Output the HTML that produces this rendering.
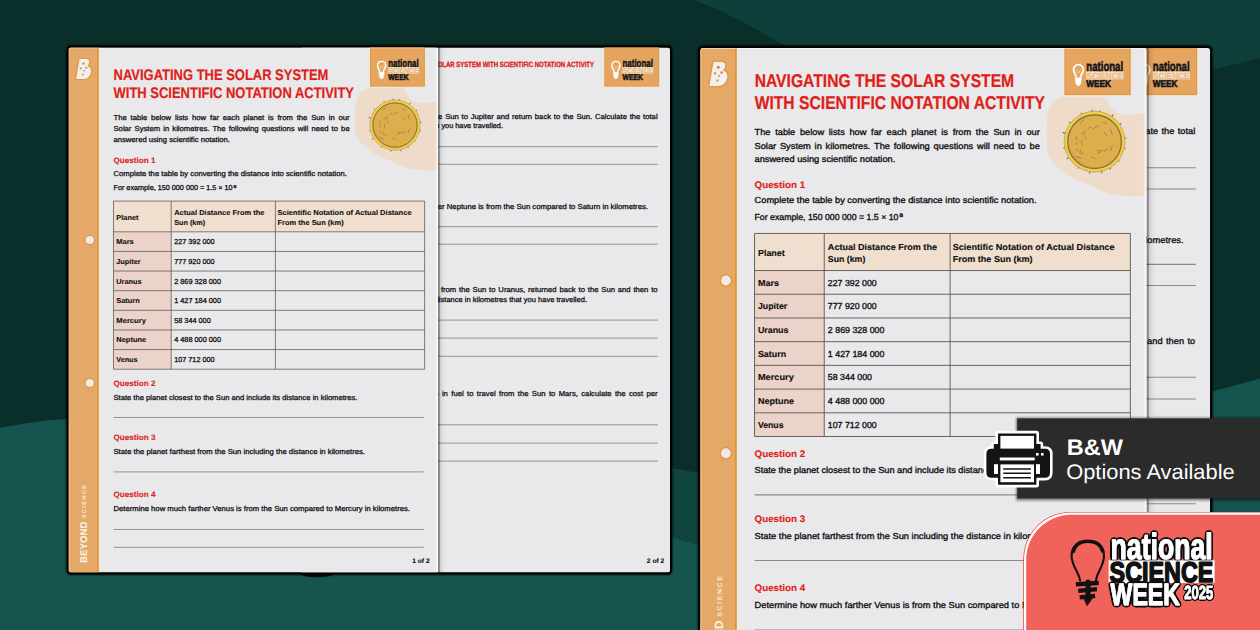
<!DOCTYPE html>
<html lang="en"><head><meta charset="utf-8"><title>Navigating the Solar System with Scientific Notation Activity</title>
<style>html,body{margin:0;padding:0;background:#0a2f2b}body{width:1260px;height:630px;overflow:hidden;position:relative;font-family:"Liberation Sans",sans-serif}svg{position:absolute;left:0;top:0;display:block}text{white-space:pre}</style></head><body>
<svg width="1260" height="630" viewBox="0 0 1260 630" font-family="Liberation Sans, sans-serif" text-rendering="geometricPrecision">
<defs><filter id="blur2" x="-5%" y="-5%" width="110%" height="110%"><feGaussianBlur stdDeviation="0.8"/></filter><filter id="blur4" x="-10%" y="-20%" width="120%" height="140%"><feGaussianBlur stdDeviation="2.5"/></filter><linearGradient id="edge" x1="0" x2="1" y1="0" y2="0"><stop offset="0" stop-color="#000" stop-opacity=".45"/><stop offset=".19" stop-color="#000" stop-opacity=".38"/><stop offset=".27" stop-color="#000" stop-opacity=".13"/><stop offset=".55" stop-color="#000" stop-opacity=".04"/><stop offset="1" stop-color="#000" stop-opacity="0"/></linearGradient><linearGradient id="hl" x1="0" x2="1" y1="0" y2="0"><stop offset="0" stop-color="#fff" stop-opacity="0"/><stop offset="1" stop-color="#fff" stop-opacity=".9"/></linearGradient><filter id="ol" x="-5%" y="-15%" width="110%" height="130%"><feGaussianBlur in="SourceAlpha" stdDeviation="1.5"/><feComponentTransfer result="d"><feFuncA type="linear" slope="12" intercept="-0.6"/></feComponentTransfer><feFlood flood-color="#111"/><feComposite in2="d" operator="in" result="o"/><feMerge><feMergeNode in="o"/><feMergeNode in="SourceGraphic"/></feMerge></filter><filter id="ol2" x="-8%" y="-20%" width="116%" height="140%"><feGaussianBlur in="SourceAlpha" stdDeviation="1.2"/><feComponentTransfer result="d"><feFuncA type="linear" slope="12" intercept="-0.6"/></feComponentTransfer><feFlood flood-color="#111"/><feComposite in2="d" operator="in" result="o"/><feMerge><feMergeNode in="o"/><feMergeNode in="SourceGraphic"/></feMerge></filter></defs>
<rect width="1260" height="630" fill="#0a2f2b"/>
<path d="M692 0 C720 8 750 26 783 44.5 C900 110 1100 100 1211 70 L1260 58 V0 Z" fill="#0f3f3a"/>
<path d="M0 428 C30 422 50 420 67 419 C300 405 520 440 685 470.5 C800 492 1000 450 1211 391.5 L1260 381 V630 H0 Z" fill="#0f443f"/>
<path d="M0 428 C30 422 50 420 67 419 C250 408 450 470 685 541.5 C700 546 720 550 760 560 L1211 392 L1260 378.5 V630 H0 Z" fill="#16544f"/>
<ellipse cx="317" cy="573.6" rx="17" ry="3.6" fill="#000" opacity=".8"/>
<rect x="66.3" y="45.2" width="606.0" height="529.6" rx="4.5" fill="#000" filter="url(#blur2)"/><rect x="66.9" y="45.8" width="604.8" height="528.4" rx="3.8" fill="#000"/>
<g transform="translate(300,47.5)">
<clipPath id="cp2a"><rect x="0" y="0" width="370.0" height="525.0" rx="2.5"/></clipPath>
<g clip-path="url(#cp2a)" font-family="Liberation Sans, sans-serif">
<rect x="0" y="0" width="370.0" height="525.0" fill="#e9e9ec"/>
<rect x="304.8" y="0" width="53.9" height="38.6" fill="#e5a55f"/>
<rect x="304.8" y="0" width="53.9" height="38.6" fill="none" stroke="#e8992f" stroke-width="1"/>
<g transform="translate(311.10,13.10) scale(0.960)" fill="none" stroke="#fff" stroke-width="1.5" stroke-linecap="round"><path d="M3.0 11.2 C2.9 9.2 0.8 8.2 0.8 5.0 A4.2 4.2 0 0 1 9.2 5.0 C9.2 8.2 7.1 9.2 7.0 11.2"/><path d="M3.4 5.2 L4.4 8 M6.6 5.2 L5.6 8" stroke-width="0.5" opacity=".7"/><path d="M2.3 12.2 H7.7 L6.9 17.6 L5 19.2 L3.1 17.6 Z" fill="#fff" stroke-width="0.5"/></g>
<g font-family="Liberation Sans, sans-serif" font-weight="700">
<text x="322.5" y="19.2" font-size="11.2" fill="#10141c" stroke="#10141c" stroke-width="0.45" textLength="30.4" lengthAdjust="spacingAndGlyphs">national</text>
<rect x="322.5" y="19.6" width="30.6" height="6.4" fill="#f3ece2" opacity=".85"/>
<text x="322.8" y="25.5" font-size="7.4" fill="#e9b57c" textLength="30" lengthAdjust="spacingAndGlyphs">SCIENCE</text>
<text x="322.5" y="32.4" font-size="8.2" fill="#10141c" stroke="#10141c" stroke-width="0.5" textLength="20.4" lengthAdjust="spacingAndGlyphs">WEEK</text>
</g>
<text x="81.5" y="19.7" font-size="7.6" font-weight="700" fill="#dc1c16" stroke="#dc1c16" stroke-width="0.3" textLength="212.5" lengthAdjust="spacingAndGlyphs" >NAVIGATING THE SOLAR SYSTEM WITH SCIENTIFIC NOTATION ACTIVITY</text>
<text transform="translate(76.4,71.3) scale(1.062,1)" font-size="7.23" fill="#111" stroke="#111" stroke-width="0.28" word-spacing="0.601">You travel from the Sun to Jupiter and return back to the Sun. Calculate the total</text>
<text x="112.0" y="80.3" font-size="7.23" font-weight="400" fill="#111" stroke="#111" stroke-width="0.28" textLength="91.0" lengthAdjust="spacingAndGlyphs" >distance you have travelled.</text>
<text x="47.0" y="161.6" font-size="7.23" font-weight="400" fill="#111" stroke="#111" stroke-width="0.28" textLength="301.0" lengthAdjust="spacingAndGlyphs" >Determine how much farther Neptune is from the Sun compared to Saturn in kilometres.</text>
<text transform="translate(93.3,244.8) scale(1.062,1)" font-size="7.23" fill="#111" stroke="#111" stroke-width="0.28" word-spacing="0.683">You travelled from the Sun to Uranus, returned back to the Sun and then to</text>
<text x="56.0" y="254.9" font-size="7.23" font-weight="400" fill="#111" stroke="#111" stroke-width="0.28" textLength="231.0" lengthAdjust="spacingAndGlyphs" >Neptune. Calculate the distance in kilometres that you have travelled.</text>
<text transform="translate(70.7,348.9) scale(1.062,1)" font-size="7.23" fill="#111" stroke="#111" stroke-width="0.28" word-spacing="1.210">If it costs $2 billion in fuel to travel from the Sun to Mars, calculate the cost per</text>
<path d="M45.0 99.2H358.0 M45.0 116.8H358.0 M45.0 179.2H358.0 M45.0 196.7H358.0 M45.0 272.6H358.0 M45.0 290.6H358.0 M45.0 308.8H358.0 M45.0 377.3H358.0 M45.0 395.6H358.0 M45.0 413.6H358.0" stroke="#8a8a8c" stroke-width="0.9" fill="none"/>
<text x="346.8" y="515.5" font-size="6.6" font-weight="700" fill="#111" stroke="#111" stroke-width="0.12" textLength="17.5" lengthAdjust="spacingAndGlyphs" >2 of 2</text>
</g>
</g>
<g transform="translate(68.6,47.5)">
<rect x="369.4" y="0" width="8" height="525" fill="url(#edge)"/>
<clipPath id="cp1a"><rect x="0" y="0" width="369.4" height="525.0" rx="2.5"/></clipPath>
<g clip-path="url(#cp1a)" font-family="Liberation Sans, sans-serif">
<rect x="0" y="0" width="369.4" height="525.0" fill="#e9e9ec"/>
<path d="M303 40.5 H330 C336.5 40.5 338 45 339.5 48.5 C341.5 52.5 346 54.6 351 55.1 C357 55.7 363 55.2 367.5 53.4 L371 51.5 V122.8 C358 122.8 350 123 343 121.5 C332 119 328 116 324 114.3 C314 110 308 108.5 303.4 104.8 C296 99 289 94 286.7 86 V63 C286.7 49 293 40.5 303 40.5 Z" fill="#eedbca"/>
<g transform="translate(326.4,77.6)">
<line x1="24.0" y1="5.2" x2="25.4" y2="5.5" stroke="#7d7262" stroke-width="1.0" stroke-linecap="round"/>
<line x1="19.2" y1="15.3" x2="20.2" y2="16.1" stroke="#7d7262" stroke-width="1.0" stroke-linecap="round"/>
<line x1="12.4" y1="21.2" x2="13.2" y2="22.7" stroke="#7d7262" stroke-width="1.0" stroke-linecap="round"/>
<line x1="5.6" y1="23.9" x2="6.1" y2="25.8" stroke="#7d7262" stroke-width="1.0" stroke-linecap="round"/>
<line x1="-3.9" y1="24.3" x2="-4.1" y2="26.0" stroke="#7d7262" stroke-width="1.0" stroke-linecap="round"/>
<line x1="-13.0" y1="20.9" x2="-13.7" y2="22.0" stroke="#7d7262" stroke-width="1.0" stroke-linecap="round"/>
<line x1="-21.0" y1="12.9" x2="-22.9" y2="14.1" stroke="#7d7262" stroke-width="1.0" stroke-linecap="round"/>
<line x1="-24.0" y1="5.3" x2="-25.5" y2="5.6" stroke="#7d7262" stroke-width="1.0" stroke-linecap="round"/>
<line x1="-23.7" y1="-6.7" x2="-26.0" y2="-7.4" stroke="#7d7262" stroke-width="1.0" stroke-linecap="round"/>
<line x1="-19.5" y1="-15.0" x2="-20.8" y2="-16.1" stroke="#7d7262" stroke-width="1.0" stroke-linecap="round"/>
<line x1="-10.5" y1="-22.3" x2="-11.0" y2="-23.4" stroke="#7d7262" stroke-width="1.0" stroke-linecap="round"/>
<line x1="-1.7" y1="-24.5" x2="-1.9" y2="-26.1" stroke="#7d7262" stroke-width="1.0" stroke-linecap="round"/>
<line x1="4.4" y1="-24.2" x2="4.6" y2="-25.5" stroke="#7d7262" stroke-width="1.0" stroke-linecap="round"/>
<line x1="14.0" y1="-20.2" x2="15.3" y2="-22.1" stroke="#7d7262" stroke-width="1.0" stroke-linecap="round"/>
<line x1="20.3" y1="-13.9" x2="21.9" y2="-15.0" stroke="#7d7262" stroke-width="1.0" stroke-linecap="round"/>
<line x1="24.4" y1="-2.8" x2="26.1" y2="-3.0" stroke="#7d7262" stroke-width="1.0" stroke-linecap="round"/>
<circle r="25.2" fill="#efd03a" stroke="#a99a86" stroke-width="0.6"/>
<circle r="22.2" fill="#ddae4c" stroke="#7f6350" stroke-width="1.0"/>
<path d="M-21.6 0 A21.6 21.6 0 0 0 0 21.6 A27.2 27.2 0 0 1 -21.6 0 Z" fill="#c99a48" opacity=".55"/>
<path d="M-7.5 -2.3 q-0.5 -1.5 0.0 -1.8" stroke="#94714e" stroke-width="0.8" fill="none" opacity=".75" stroke-linecap="round"/>
<path d="M-5.2 -11.1 q0.7 -1.0 2.4 -0.9" stroke="#94714e" stroke-width="0.8" fill="none" opacity=".75" stroke-linecap="round"/>
<path d="M-10.2 3.1 q-0.7 -2.6 -0.4 -4.0" stroke="#94714e" stroke-width="0.8" fill="none" opacity=".75" stroke-linecap="round"/>
<path d="M0.5 14.0 q-2.0 -1.1 -3.0 -1.1" stroke="#94714e" stroke-width="0.8" fill="none" opacity=".75" stroke-linecap="round"/>
<path d="M-1.4 -10.5 q1.5 -1.7 4.0 -2.2" stroke="#94714e" stroke-width="0.8" fill="none" opacity=".75" stroke-linecap="round"/>
<path d="M-14.1 8.0 q-1.0 -1.5 -1.0 -1.8" stroke="#94714e" stroke-width="0.8" fill="none" opacity=".75" stroke-linecap="round"/>
<path d="M14.7 3.7 q-1.1 1.2 -1.2 3.7" stroke="#94714e" stroke-width="0.8" fill="none" opacity=".75" stroke-linecap="round"/>
<path d="M7.7 -7.7 q0.7 0.8 2.3 2.8" stroke="#94714e" stroke-width="0.8" fill="none" opacity=".75" stroke-linecap="round"/>
<path d="M-11.0 -6.1 q1.2 -1.8 3.3 -2.4" stroke="#94714e" stroke-width="0.8" fill="none" opacity=".75" stroke-linecap="round"/>
<path d="M-14.9 2.4 q-0.5 -1.5 0.1 -1.8" stroke="#94714e" stroke-width="0.8" fill="none" opacity=".75" stroke-linecap="round"/>
<path d="M-11.5 -15.3 q0.8 -2.1 2.6 -3.1" stroke="#94714e" stroke-width="0.8" fill="none" opacity=".75" stroke-linecap="round"/>
<path d="M-11.4 10.0 q-1.1 -1.2 -1.1 -1.2" stroke="#94714e" stroke-width="0.8" fill="none" opacity=".75" stroke-linecap="round"/>
<path d="M4.2 7.4 q-1.4 -0.4 -1.7 0.4" stroke="#94714e" stroke-width="0.8" fill="none" opacity=".75" stroke-linecap="round"/>
<path d="M6.9 7.3 q-1.8 -0.1 -2.6 1.0" stroke="#94714e" stroke-width="0.8" fill="none" opacity=".75" stroke-linecap="round"/>
<path d="M10.9 6.1 q-1.8 0.4 -2.5 2.0" stroke="#94714e" stroke-width="0.8" fill="none" opacity=".75" stroke-linecap="round"/>
<path d="M7.4 -15.9 q0.6 -0.2 2.3 0.8" stroke="#94714e" stroke-width="0.8" fill="none" opacity=".75" stroke-linecap="round"/>
<path d="M-11.2 13.8 q-2.6 -1.3 -4.2 -1.5" stroke="#94714e" stroke-width="0.8" fill="none" opacity=".75" stroke-linecap="round"/>
<path d="M4.4 8.8 q-1.5 -0.1 -2.0 1.1" stroke="#94714e" stroke-width="0.8" fill="none" opacity=".75" stroke-linecap="round"/>
<path d="M-8.7 -5.4 q-0.1 -1.3 0.7 -1.4" stroke="#94714e" stroke-width="0.8" fill="none" opacity=".75" stroke-linecap="round"/>
<path d="M-9.5 10.2 q-1.8 -2.4 -2.6 -3.6" stroke="#94714e" stroke-width="0.8" fill="none" opacity=".75" stroke-linecap="round"/>
<path d="M-14.5 -1.4 q-1.1 -2.3 -1.2 -3.4" stroke="#94714e" stroke-width="0.8" fill="none" opacity=".75" stroke-linecap="round"/>
<path d="M13.3 -9.8 q0.2 1.4 1.4 4.0" stroke="#94714e" stroke-width="0.8" fill="none" opacity=".75" stroke-linecap="round"/>
</g>
<rect x="0" y="0" width="29.9" height="525.0" fill="#e4a868"/>
<rect x="28.7" y="0" width="1.4" height="525.0" fill="#e98f2b"/>
<rect x="0" y="0" width="1.2" height="525.0" fill="#f2b877"/>
<g><path d="M11.4 11 H17 C20.6 11 21.7 13.4 21.1 15.6 C20.8 16.8 20.3 17.6 19.6 18.3 C22.1 19.2 23.4 21.8 22.8 25 C22 29.2 19 32 14.6 32 H8.2 C7.3 32 6.9 31.4 7.1 30.6 L10.3 12 C10.4 11.4 10.8 11 11.4 11 Z" fill="#eef0f5" stroke="#e8952a" stroke-width="1.1" stroke-linejoin="round"/><circle cx="14.9" cy="16.1" r="1.15" fill="#de7412"/><circle cx="12.2" cy="20.9" r="1.05" fill="#e89a32"/><circle cx="17.6" cy="20.3" r="1.05" fill="#e58424"/><circle cx="15.6" cy="23.2" r="0.9" fill="#e89a32"/><circle cx="14.2" cy="27" r="1" fill="#e89a32"/></g>
<circle cx="21.2" cy="192.5" r="5.2" fill="#e8952d"/><circle cx="21.2" cy="192.5" r="4.1" fill="#ececf0"/>
<circle cx="21.2" cy="335.5" r="5.2" fill="#e8952d"/><circle cx="21.2" cy="335.5" r="4.1" fill="#ececf0"/>
<g transform="translate(18.6,515.4) rotate(-90)" fill="#fdf6ec" font-weight="700"><text x="0" y="0" font-size="9.8" textLength="41.3" lengthAdjust="spacingAndGlyphs">BEYOND</text><text x="44.6" y="-0.9" font-size="5.6" textLength="33.4" lengthAdjust="spacing" fill="#fbe9d2">SCIENCE</text></g>
<rect x="301.9" y="0" width="53.9" height="38.6" fill="#e5a55f"/>
<rect x="301.9" y="0" width="53.9" height="38.6" fill="none" stroke="#e8992f" stroke-width="1"/>
<g transform="translate(308.20,13.10) scale(0.960)" fill="none" stroke="#fff" stroke-width="1.5" stroke-linecap="round"><path d="M3.0 11.2 C2.9 9.2 0.8 8.2 0.8 5.0 A4.2 4.2 0 0 1 9.2 5.0 C9.2 8.2 7.1 9.2 7.0 11.2"/><path d="M3.4 5.2 L4.4 8 M6.6 5.2 L5.6 8" stroke-width="0.5" opacity=".7"/><path d="M2.3 12.2 H7.7 L6.9 17.6 L5 19.2 L3.1 17.6 Z" fill="#fff" stroke-width="0.5"/></g>
<g font-family="Liberation Sans, sans-serif" font-weight="700">
<text x="319.6" y="19.2" font-size="11.2" fill="#10141c" stroke="#10141c" stroke-width="0.45" textLength="30.4" lengthAdjust="spacingAndGlyphs">national</text>
<rect x="319.6" y="19.6" width="30.6" height="6.4" fill="#f3ece2" opacity=".85"/>
<text x="319.9" y="25.5" font-size="7.4" fill="#e9b57c" textLength="30" lengthAdjust="spacingAndGlyphs">SCIENCE</text>
<text x="319.6" y="32.4" font-size="8.2" fill="#10141c" stroke="#10141c" stroke-width="0.5" textLength="20.4" lengthAdjust="spacingAndGlyphs">WEEK</text>
</g>
<text x="45.0" y="32.2" font-size="15.3" font-weight="700" fill="#df1f18" stroke="#df1f18" stroke-width="0.2" textLength="214.8" lengthAdjust="spacingAndGlyphs" >NAVIGATING THE SOLAR SYSTEM</text>
<text x="45.0" y="50.8" font-size="15.3" font-weight="700" fill="#df1f18" stroke="#df1f18" stroke-width="0.2" textLength="240.4" lengthAdjust="spacingAndGlyphs" >WITH SCIENTIFIC NOTATION ACTIVITY</text>
<text transform="translate(44.9,72.4) scale(1.062,1)" font-size="7.23" font-weight="400" fill="#111" stroke="#111" stroke-width="0.28" word-spacing="1.642" >The table below lists how far each planet is from the Sun in our</text>
<text transform="translate(44.9,83.4) scale(1.062,1)" font-size="7.23" font-weight="400" fill="#111" stroke="#111" stroke-width="0.28" word-spacing="0.944" >Solar System in kilometres. The following questions will need to be</text>
<text x="44.9" y="94.1" font-size="7.23" font-weight="400" fill="#111" stroke="#111" stroke-width="0.28" textLength="116.5" lengthAdjust="spacingAndGlyphs" >answered using scientific notation.</text>
<text x="44.9" y="115.6" font-size="7.9" font-weight="700" fill="#df1f18" stroke="#df1f18" stroke-width="0.12" textLength="42.0" lengthAdjust="spacingAndGlyphs" >Question 1</text>
<text x="44.9" y="128.5" font-size="7.23" font-weight="400" fill="#111" stroke="#111" stroke-width="0.28" textLength="233.5" lengthAdjust="spacingAndGlyphs" >Complete the table by converting the distance into scientific notation.</text>
<text x="44.9" y="142.5" font-size="7.23" font-weight="400" fill="#111" stroke="#111" stroke-width="0.28" textLength="119.1" lengthAdjust="spacingAndGlyphs" >For example, 150 000 000 = 1.5 × 10</text>
<text x="165.0" y="140.1" font-size="4.2" font-weight="400" fill="#111" stroke="#111" stroke-width="0.28" textLength="3.0" lengthAdjust="spacingAndGlyphs" >8</text>
<rect x="44.9" y="153.6" width="311.1" height="30.7" fill="#f0dfcf"/>
<rect x="44.9" y="184.3" width="57.7" height="137.4" fill="#ecd3ca"/>
<path d="M44.9 184.30H356.0 M44.9 203.93H356.0 M44.9 223.56H356.0 M44.9 243.19H356.0 M44.9 262.81H356.0 M44.9 282.44H356.0 M44.9 302.07H356.0 M44.9 321.70H356.0 M44.9 153.6H356.0 M44.9 153.6V321.7 M102.6 153.6V321.7 M206.8 153.6V321.7 M356.0 153.6V321.7" stroke="#5a5552" stroke-width="0.75" fill="none"/>
<text x="47.7" y="172.1" font-size="7.2" font-weight="700" fill="#111" stroke="#111" stroke-width="0.12" textLength="22.3" lengthAdjust="spacingAndGlyphs" >Planet</text>
<text x="105.6" y="167.1" font-size="7.2" font-weight="700" fill="#111" stroke="#111" stroke-width="0.12" textLength="90.3" lengthAdjust="spacingAndGlyphs" >Actual Distance From the</text>
<text x="105.6" y="177.0" font-size="7.2" font-weight="700" fill="#111" stroke="#111" stroke-width="0.12" textLength="31.0" lengthAdjust="spacingAndGlyphs" >Sun (km)</text>
<text x="208.9" y="167.1" font-size="7.2" font-weight="700" fill="#111" stroke="#111" stroke-width="0.12" textLength="134.1" lengthAdjust="spacingAndGlyphs" >Scientific Notation of Actual Distance</text>
<text x="208.9" y="177.0" font-size="7.2" font-weight="700" fill="#111" stroke="#111" stroke-width="0.12" textLength="66.2" lengthAdjust="spacingAndGlyphs" >From the Sun (km)</text>
<text x="47.7" y="196.8" font-size="7.2" font-weight="700" fill="#111" stroke="#111" stroke-width="0.12" textLength="17.5" lengthAdjust="spacingAndGlyphs" >Mars</text>
<text x="105.6" y="196.8" font-size="7.2" font-weight="400" fill="#111" stroke="#111" stroke-width="0.28" textLength="40.4" lengthAdjust="spacingAndGlyphs" >227 392 000</text>
<text x="47.7" y="216.4" font-size="7.2" font-weight="700" fill="#111" stroke="#111" stroke-width="0.12" textLength="24.3" lengthAdjust="spacingAndGlyphs" >Jupiter</text>
<text x="105.6" y="216.4" font-size="7.2" font-weight="400" fill="#111" stroke="#111" stroke-width="0.28" textLength="40.4" lengthAdjust="spacingAndGlyphs" >777 920 000</text>
<text x="47.7" y="236.1" font-size="7.2" font-weight="700" fill="#111" stroke="#111" stroke-width="0.12" textLength="25.3" lengthAdjust="spacingAndGlyphs" >Uranus</text>
<text x="105.6" y="236.1" font-size="7.2" font-weight="400" fill="#111" stroke="#111" stroke-width="0.28" textLength="46.8" lengthAdjust="spacingAndGlyphs" >2 869 328 000</text>
<text x="47.7" y="255.7" font-size="7.2" font-weight="700" fill="#111" stroke="#111" stroke-width="0.12" textLength="23.4" lengthAdjust="spacingAndGlyphs" >Saturn</text>
<text x="105.6" y="255.7" font-size="7.2" font-weight="400" fill="#111" stroke="#111" stroke-width="0.28" textLength="46.8" lengthAdjust="spacingAndGlyphs" >1 427 184 000</text>
<text x="47.7" y="275.3" font-size="7.2" font-weight="700" fill="#111" stroke="#111" stroke-width="0.12" textLength="29.7" lengthAdjust="spacingAndGlyphs" >Mercury</text>
<text x="105.6" y="275.3" font-size="7.2" font-weight="400" fill="#111" stroke="#111" stroke-width="0.28" textLength="36.5" lengthAdjust="spacingAndGlyphs" >58 344 000</text>
<text x="47.7" y="294.9" font-size="7.2" font-weight="700" fill="#111" stroke="#111" stroke-width="0.12" textLength="30.0" lengthAdjust="spacingAndGlyphs" >Neptune</text>
<text x="105.6" y="294.9" font-size="7.2" font-weight="400" fill="#111" stroke="#111" stroke-width="0.28" textLength="46.8" lengthAdjust="spacingAndGlyphs" >4 488 000 000</text>
<text x="47.7" y="314.6" font-size="7.2" font-weight="700" fill="#111" stroke="#111" stroke-width="0.12" textLength="21.2" lengthAdjust="spacingAndGlyphs" >Venus</text>
<text x="105.6" y="314.6" font-size="7.2" font-weight="400" fill="#111" stroke="#111" stroke-width="0.28" textLength="40.4" lengthAdjust="spacingAndGlyphs" >107 712 000</text>
<text x="44.9" y="338.4" font-size="7.9" font-weight="700" fill="#df1f18" stroke="#df1f18" stroke-width="0.12" textLength="42.0" lengthAdjust="spacingAndGlyphs" >Question 2</text>
<text x="44.9" y="352.2" font-size="7.23" font-weight="400" fill="#111" stroke="#111" stroke-width="0.28" textLength="244.0" lengthAdjust="spacingAndGlyphs" >State the planet closest to the Sun and include its distance in kilometres.</text>
<text x="44.9" y="392.2" font-size="7.9" font-weight="700" fill="#df1f18" stroke="#df1f18" stroke-width="0.12" textLength="42.0" lengthAdjust="spacingAndGlyphs" >Question 3</text>
<text x="44.9" y="406.2" font-size="7.23" font-weight="400" fill="#111" stroke="#111" stroke-width="0.28" textLength="251.5" lengthAdjust="spacingAndGlyphs" >State the planet farthest from the Sun including the distance in kilometres.</text>
<text x="44.9" y="449.8" font-size="7.9" font-weight="700" fill="#df1f18" stroke="#df1f18" stroke-width="0.12" textLength="42.0" lengthAdjust="spacingAndGlyphs" >Question 4</text>
<text x="44.9" y="463.5" font-size="7.23" font-weight="400" fill="#111" stroke="#111" stroke-width="0.28" textLength="296.5" lengthAdjust="spacingAndGlyphs" >Determine how much farther Venus is from the Sun compared to Mercury in kilometres.</text>
<path d="M44.9 370.0H355.2 M44.9 424.4H355.2 M44.9 482.0H355.2 M44.9 499.8H355.2" stroke="#8a8a8c" stroke-width="0.9" fill="none"/>
<text x="343.6" y="515.5" font-size="6.6" font-weight="700" fill="#111" stroke="#111" stroke-width="0.12" textLength="17.5" lengthAdjust="spacingAndGlyphs" >1 of 2</text>
<rect x="366.4" y="0" width="3" height="525.0" fill="url(#hl)"/>
<rect x="0" y="0" width="369.4" height="0.9" fill="#fff" opacity=".45"/>
</g>
</g>
<rect x="698.0" y="45.6" width="514.5" height="644.6" rx="4.5" fill="#000" filter="url(#blur2)"/><rect x="698.6" y="46.2" width="513.3" height="643.4" rx="3.8" fill="#000"/>
<g transform="translate(700.3,47.9) scale(1.208)">
<g transform="translate(52.10,0)">
<clipPath id="cp2b"><rect x="0" y="0" width="370.0" height="525.0" rx="2.5"/></clipPath>
<g clip-path="url(#cp2b)" font-family="Liberation Sans, sans-serif">
<rect x="0" y="0" width="370.0" height="525.0" fill="#e9e9ec"/>
<rect x="304.8" y="0" width="53.9" height="38.6" fill="#e5a55f"/>
<rect x="304.8" y="0" width="53.9" height="38.6" fill="none" stroke="#e8992f" stroke-width="1"/>
<g transform="translate(311.10,13.10) scale(0.960)" fill="none" stroke="#fff" stroke-width="1.5" stroke-linecap="round"><path d="M3.0 11.2 C2.9 9.2 0.8 8.2 0.8 5.0 A4.2 4.2 0 0 1 9.2 5.0 C9.2 8.2 7.1 9.2 7.0 11.2"/><path d="M3.4 5.2 L4.4 8 M6.6 5.2 L5.6 8" stroke-width="0.5" opacity=".7"/><path d="M2.3 12.2 H7.7 L6.9 17.6 L5 19.2 L3.1 17.6 Z" fill="#fff" stroke-width="0.5"/></g>
<g font-family="Liberation Sans, sans-serif" font-weight="700">
<text x="322.5" y="19.2" font-size="11.2" fill="#10141c" stroke="#10141c" stroke-width="0.45" textLength="30.4" lengthAdjust="spacingAndGlyphs">national</text>
<rect x="322.5" y="19.6" width="30.6" height="6.4" fill="#f3ece2" opacity=".85"/>
<text x="322.8" y="25.5" font-size="7.4" fill="#e9b57c" textLength="30" lengthAdjust="spacingAndGlyphs">SCIENCE</text>
<text x="322.5" y="32.4" font-size="8.2" fill="#10141c" stroke="#10141c" stroke-width="0.5" textLength="20.4" lengthAdjust="spacingAndGlyphs">WEEK</text>
</g>
<text x="81.5" y="19.7" font-size="7.6" font-weight="700" fill="#dc1c16" stroke="#dc1c16" stroke-width="0.3" textLength="212.5" lengthAdjust="spacingAndGlyphs" >NAVIGATING THE SOLAR SYSTEM WITH SCIENTIFIC NOTATION ACTIVITY</text>
<text transform="translate(76.4,71.3) scale(1.062,1)" font-size="7.23" fill="#111" stroke="#111" stroke-width="0.28" word-spacing="0.601">You travel from the Sun to Jupiter and return back to the Sun. Calculate the total</text>
<text x="112.0" y="80.3" font-size="7.23" font-weight="400" fill="#111" stroke="#111" stroke-width="0.28" textLength="91.0" lengthAdjust="spacingAndGlyphs" >distance you have travelled.</text>
<text x="47.0" y="161.6" font-size="7.23" font-weight="400" fill="#111" stroke="#111" stroke-width="0.28" textLength="301.0" lengthAdjust="spacingAndGlyphs" >Determine how much farther Neptune is from the Sun compared to Saturn in kilometres.</text>
<text transform="translate(93.3,244.8) scale(1.062,1)" font-size="7.23" fill="#111" stroke="#111" stroke-width="0.28" word-spacing="0.683">You travelled from the Sun to Uranus, returned back to the Sun and then to</text>
<text x="56.0" y="254.9" font-size="7.23" font-weight="400" fill="#111" stroke="#111" stroke-width="0.28" textLength="231.0" lengthAdjust="spacingAndGlyphs" >Neptune. Calculate the distance in kilometres that you have travelled.</text>
<text transform="translate(70.7,348.9) scale(1.062,1)" font-size="7.23" fill="#111" stroke="#111" stroke-width="0.28" word-spacing="1.210">If it costs $2 billion in fuel to travel from the Sun to Mars, calculate the cost per</text>
<path d="M45.0 99.2H358.0 M45.0 116.8H358.0 M45.0 179.2H358.0 M45.0 196.7H358.0 M45.0 272.6H358.0 M45.0 290.6H358.0 M45.0 308.8H358.0 M45.0 377.3H358.0 M45.0 395.6H358.0 M45.0 413.6H358.0" stroke="#8a8a8c" stroke-width="0.9" fill="none"/>
<text x="346.8" y="515.5" font-size="6.6" font-weight="700" fill="#111" stroke="#111" stroke-width="0.12" textLength="17.5" lengthAdjust="spacingAndGlyphs" >2 of 2</text>
</g>
</g>
<rect x="369.4" y="0" width="8" height="525" fill="url(#edge)"/>
<clipPath id="cp1b"><rect x="0" y="0" width="369.4" height="525.0" rx="2.5"/></clipPath>
<g clip-path="url(#cp1b)" font-family="Liberation Sans, sans-serif">
<rect x="0" y="0" width="369.4" height="525.0" fill="#e9e9ec"/>
<path d="M303 40.5 H330 C336.5 40.5 338 45 339.5 48.5 C341.5 52.5 346 54.6 351 55.1 C357 55.7 363 55.2 367.5 53.4 L371 51.5 V122.8 C358 122.8 350 123 343 121.5 C332 119 328 116 324 114.3 C314 110 308 108.5 303.4 104.8 C296 99 289 94 286.7 86 V63 C286.7 49 293 40.5 303 40.5 Z" fill="#eedbca"/>
<g transform="translate(326.4,77.6)">
<line x1="24.0" y1="5.2" x2="25.4" y2="5.5" stroke="#7d7262" stroke-width="1.0" stroke-linecap="round"/>
<line x1="19.2" y1="15.3" x2="20.2" y2="16.1" stroke="#7d7262" stroke-width="1.0" stroke-linecap="round"/>
<line x1="12.4" y1="21.2" x2="13.2" y2="22.7" stroke="#7d7262" stroke-width="1.0" stroke-linecap="round"/>
<line x1="5.6" y1="23.9" x2="6.1" y2="25.8" stroke="#7d7262" stroke-width="1.0" stroke-linecap="round"/>
<line x1="-3.9" y1="24.3" x2="-4.1" y2="26.0" stroke="#7d7262" stroke-width="1.0" stroke-linecap="round"/>
<line x1="-13.0" y1="20.9" x2="-13.7" y2="22.0" stroke="#7d7262" stroke-width="1.0" stroke-linecap="round"/>
<line x1="-21.0" y1="12.9" x2="-22.9" y2="14.1" stroke="#7d7262" stroke-width="1.0" stroke-linecap="round"/>
<line x1="-24.0" y1="5.3" x2="-25.5" y2="5.6" stroke="#7d7262" stroke-width="1.0" stroke-linecap="round"/>
<line x1="-23.7" y1="-6.7" x2="-26.0" y2="-7.4" stroke="#7d7262" stroke-width="1.0" stroke-linecap="round"/>
<line x1="-19.5" y1="-15.0" x2="-20.8" y2="-16.1" stroke="#7d7262" stroke-width="1.0" stroke-linecap="round"/>
<line x1="-10.5" y1="-22.3" x2="-11.0" y2="-23.4" stroke="#7d7262" stroke-width="1.0" stroke-linecap="round"/>
<line x1="-1.7" y1="-24.5" x2="-1.9" y2="-26.1" stroke="#7d7262" stroke-width="1.0" stroke-linecap="round"/>
<line x1="4.4" y1="-24.2" x2="4.6" y2="-25.5" stroke="#7d7262" stroke-width="1.0" stroke-linecap="round"/>
<line x1="14.0" y1="-20.2" x2="15.3" y2="-22.1" stroke="#7d7262" stroke-width="1.0" stroke-linecap="round"/>
<line x1="20.3" y1="-13.9" x2="21.9" y2="-15.0" stroke="#7d7262" stroke-width="1.0" stroke-linecap="round"/>
<line x1="24.4" y1="-2.8" x2="26.1" y2="-3.0" stroke="#7d7262" stroke-width="1.0" stroke-linecap="round"/>
<circle r="25.2" fill="#efd03a" stroke="#a99a86" stroke-width="0.6"/>
<circle r="22.2" fill="#ddae4c" stroke="#7f6350" stroke-width="1.0"/>
<path d="M-21.6 0 A21.6 21.6 0 0 0 0 21.6 A27.2 27.2 0 0 1 -21.6 0 Z" fill="#c99a48" opacity=".55"/>
<path d="M-7.5 -2.3 q-0.5 -1.5 0.0 -1.8" stroke="#94714e" stroke-width="0.8" fill="none" opacity=".75" stroke-linecap="round"/>
<path d="M-5.2 -11.1 q0.7 -1.0 2.4 -0.9" stroke="#94714e" stroke-width="0.8" fill="none" opacity=".75" stroke-linecap="round"/>
<path d="M-10.2 3.1 q-0.7 -2.6 -0.4 -4.0" stroke="#94714e" stroke-width="0.8" fill="none" opacity=".75" stroke-linecap="round"/>
<path d="M0.5 14.0 q-2.0 -1.1 -3.0 -1.1" stroke="#94714e" stroke-width="0.8" fill="none" opacity=".75" stroke-linecap="round"/>
<path d="M-1.4 -10.5 q1.5 -1.7 4.0 -2.2" stroke="#94714e" stroke-width="0.8" fill="none" opacity=".75" stroke-linecap="round"/>
<path d="M-14.1 8.0 q-1.0 -1.5 -1.0 -1.8" stroke="#94714e" stroke-width="0.8" fill="none" opacity=".75" stroke-linecap="round"/>
<path d="M14.7 3.7 q-1.1 1.2 -1.2 3.7" stroke="#94714e" stroke-width="0.8" fill="none" opacity=".75" stroke-linecap="round"/>
<path d="M7.7 -7.7 q0.7 0.8 2.3 2.8" stroke="#94714e" stroke-width="0.8" fill="none" opacity=".75" stroke-linecap="round"/>
<path d="M-11.0 -6.1 q1.2 -1.8 3.3 -2.4" stroke="#94714e" stroke-width="0.8" fill="none" opacity=".75" stroke-linecap="round"/>
<path d="M-14.9 2.4 q-0.5 -1.5 0.1 -1.8" stroke="#94714e" stroke-width="0.8" fill="none" opacity=".75" stroke-linecap="round"/>
<path d="M-11.5 -15.3 q0.8 -2.1 2.6 -3.1" stroke="#94714e" stroke-width="0.8" fill="none" opacity=".75" stroke-linecap="round"/>
<path d="M-11.4 10.0 q-1.1 -1.2 -1.1 -1.2" stroke="#94714e" stroke-width="0.8" fill="none" opacity=".75" stroke-linecap="round"/>
<path d="M4.2 7.4 q-1.4 -0.4 -1.7 0.4" stroke="#94714e" stroke-width="0.8" fill="none" opacity=".75" stroke-linecap="round"/>
<path d="M6.9 7.3 q-1.8 -0.1 -2.6 1.0" stroke="#94714e" stroke-width="0.8" fill="none" opacity=".75" stroke-linecap="round"/>
<path d="M10.9 6.1 q-1.8 0.4 -2.5 2.0" stroke="#94714e" stroke-width="0.8" fill="none" opacity=".75" stroke-linecap="round"/>
<path d="M7.4 -15.9 q0.6 -0.2 2.3 0.8" stroke="#94714e" stroke-width="0.8" fill="none" opacity=".75" stroke-linecap="round"/>
<path d="M-11.2 13.8 q-2.6 -1.3 -4.2 -1.5" stroke="#94714e" stroke-width="0.8" fill="none" opacity=".75" stroke-linecap="round"/>
<path d="M4.4 8.8 q-1.5 -0.1 -2.0 1.1" stroke="#94714e" stroke-width="0.8" fill="none" opacity=".75" stroke-linecap="round"/>
<path d="M-8.7 -5.4 q-0.1 -1.3 0.7 -1.4" stroke="#94714e" stroke-width="0.8" fill="none" opacity=".75" stroke-linecap="round"/>
<path d="M-9.5 10.2 q-1.8 -2.4 -2.6 -3.6" stroke="#94714e" stroke-width="0.8" fill="none" opacity=".75" stroke-linecap="round"/>
<path d="M-14.5 -1.4 q-1.1 -2.3 -1.2 -3.4" stroke="#94714e" stroke-width="0.8" fill="none" opacity=".75" stroke-linecap="round"/>
<path d="M13.3 -9.8 q0.2 1.4 1.4 4.0" stroke="#94714e" stroke-width="0.8" fill="none" opacity=".75" stroke-linecap="round"/>
</g>
<rect x="0" y="0" width="29.9" height="525.0" fill="#e4a868"/>
<rect x="28.7" y="0" width="1.4" height="525.0" fill="#e98f2b"/>
<rect x="0" y="0" width="1.2" height="525.0" fill="#f2b877"/>
<g><path d="M11.4 11 H17 C20.6 11 21.7 13.4 21.1 15.6 C20.8 16.8 20.3 17.6 19.6 18.3 C22.1 19.2 23.4 21.8 22.8 25 C22 29.2 19 32 14.6 32 H8.2 C7.3 32 6.9 31.4 7.1 30.6 L10.3 12 C10.4 11.4 10.8 11 11.4 11 Z" fill="#eef0f5" stroke="#e8952a" stroke-width="1.1" stroke-linejoin="round"/><circle cx="14.9" cy="16.1" r="1.15" fill="#de7412"/><circle cx="12.2" cy="20.9" r="1.05" fill="#e89a32"/><circle cx="17.6" cy="20.3" r="1.05" fill="#e58424"/><circle cx="15.6" cy="23.2" r="0.9" fill="#e89a32"/><circle cx="14.2" cy="27" r="1" fill="#e89a32"/></g>
<circle cx="21.2" cy="192.5" r="5.2" fill="#e8952d"/><circle cx="21.2" cy="192.5" r="4.1" fill="#ececf0"/>
<circle cx="21.2" cy="335.5" r="5.2" fill="#e8952d"/><circle cx="21.2" cy="335.5" r="4.1" fill="#ececf0"/>
<g transform="translate(18.6,515.4) rotate(-90)" fill="#fdf6ec" font-weight="700"><text x="0" y="0" font-size="9.8" textLength="41.3" lengthAdjust="spacingAndGlyphs">BEYOND</text><text x="44.6" y="-0.9" font-size="5.6" textLength="33.4" lengthAdjust="spacing" fill="#fbe9d2">SCIENCE</text></g>
<rect x="301.9" y="0" width="53.9" height="38.6" fill="#e5a55f"/>
<rect x="301.9" y="0" width="53.9" height="38.6" fill="none" stroke="#e8992f" stroke-width="1"/>
<g transform="translate(308.20,13.10) scale(0.960)" fill="none" stroke="#fff" stroke-width="1.5" stroke-linecap="round"><path d="M3.0 11.2 C2.9 9.2 0.8 8.2 0.8 5.0 A4.2 4.2 0 0 1 9.2 5.0 C9.2 8.2 7.1 9.2 7.0 11.2"/><path d="M3.4 5.2 L4.4 8 M6.6 5.2 L5.6 8" stroke-width="0.5" opacity=".7"/><path d="M2.3 12.2 H7.7 L6.9 17.6 L5 19.2 L3.1 17.6 Z" fill="#fff" stroke-width="0.5"/></g>
<g font-family="Liberation Sans, sans-serif" font-weight="700">
<text x="319.6" y="19.2" font-size="11.2" fill="#10141c" stroke="#10141c" stroke-width="0.45" textLength="30.4" lengthAdjust="spacingAndGlyphs">national</text>
<rect x="319.6" y="19.6" width="30.6" height="6.4" fill="#f3ece2" opacity=".85"/>
<text x="319.9" y="25.5" font-size="7.4" fill="#e9b57c" textLength="30" lengthAdjust="spacingAndGlyphs">SCIENCE</text>
<text x="319.6" y="32.4" font-size="8.2" fill="#10141c" stroke="#10141c" stroke-width="0.5" textLength="20.4" lengthAdjust="spacingAndGlyphs">WEEK</text>
</g>
<text x="45.0" y="32.2" font-size="15.3" font-weight="700" fill="#df1f18" stroke="#df1f18" stroke-width="0.2" textLength="214.8" lengthAdjust="spacingAndGlyphs" >NAVIGATING THE SOLAR SYSTEM</text>
<text x="45.0" y="50.8" font-size="15.3" font-weight="700" fill="#df1f18" stroke="#df1f18" stroke-width="0.2" textLength="240.4" lengthAdjust="spacingAndGlyphs" >WITH SCIENTIFIC NOTATION ACTIVITY</text>
<text transform="translate(44.9,72.4) scale(1.062,1)" font-size="7.23" font-weight="400" fill="#111" stroke="#111" stroke-width="0.28" word-spacing="1.642" >The table below lists how far each planet is from the Sun in our</text>
<text transform="translate(44.9,83.4) scale(1.062,1)" font-size="7.23" font-weight="400" fill="#111" stroke="#111" stroke-width="0.28" word-spacing="0.944" >Solar System in kilometres. The following questions will need to be</text>
<text x="44.9" y="94.1" font-size="7.23" font-weight="400" fill="#111" stroke="#111" stroke-width="0.28" textLength="116.5" lengthAdjust="spacingAndGlyphs" >answered using scientific notation.</text>
<text x="44.9" y="115.6" font-size="7.9" font-weight="700" fill="#df1f18" stroke="#df1f18" stroke-width="0.12" textLength="42.0" lengthAdjust="spacingAndGlyphs" >Question 1</text>
<text x="44.9" y="128.5" font-size="7.23" font-weight="400" fill="#111" stroke="#111" stroke-width="0.28" textLength="233.5" lengthAdjust="spacingAndGlyphs" >Complete the table by converting the distance into scientific notation.</text>
<text x="44.9" y="142.5" font-size="7.23" font-weight="400" fill="#111" stroke="#111" stroke-width="0.28" textLength="119.1" lengthAdjust="spacingAndGlyphs" >For example, 150 000 000 = 1.5 × 10</text>
<text x="165.0" y="140.1" font-size="4.2" font-weight="400" fill="#111" stroke="#111" stroke-width="0.28" textLength="3.0" lengthAdjust="spacingAndGlyphs" >8</text>
<rect x="44.9" y="153.6" width="311.1" height="30.7" fill="#f0dfcf"/>
<rect x="44.9" y="184.3" width="57.7" height="137.4" fill="#ecd3ca"/>
<path d="M44.9 184.30H356.0 M44.9 203.93H356.0 M44.9 223.56H356.0 M44.9 243.19H356.0 M44.9 262.81H356.0 M44.9 282.44H356.0 M44.9 302.07H356.0 M44.9 321.70H356.0 M44.9 153.6H356.0 M44.9 153.6V321.7 M102.6 153.6V321.7 M206.8 153.6V321.7 M356.0 153.6V321.7" stroke="#5a5552" stroke-width="0.75" fill="none"/>
<text x="47.7" y="172.1" font-size="7.2" font-weight="700" fill="#111" stroke="#111" stroke-width="0.12" textLength="22.3" lengthAdjust="spacingAndGlyphs" >Planet</text>
<text x="105.6" y="167.1" font-size="7.2" font-weight="700" fill="#111" stroke="#111" stroke-width="0.12" textLength="90.3" lengthAdjust="spacingAndGlyphs" >Actual Distance From the</text>
<text x="105.6" y="177.0" font-size="7.2" font-weight="700" fill="#111" stroke="#111" stroke-width="0.12" textLength="31.0" lengthAdjust="spacingAndGlyphs" >Sun (km)</text>
<text x="208.9" y="167.1" font-size="7.2" font-weight="700" fill="#111" stroke="#111" stroke-width="0.12" textLength="134.1" lengthAdjust="spacingAndGlyphs" >Scientific Notation of Actual Distance</text>
<text x="208.9" y="177.0" font-size="7.2" font-weight="700" fill="#111" stroke="#111" stroke-width="0.12" textLength="66.2" lengthAdjust="spacingAndGlyphs" >From the Sun (km)</text>
<text x="47.7" y="196.8" font-size="7.2" font-weight="700" fill="#111" stroke="#111" stroke-width="0.12" textLength="17.5" lengthAdjust="spacingAndGlyphs" >Mars</text>
<text x="105.6" y="196.8" font-size="7.2" font-weight="400" fill="#111" stroke="#111" stroke-width="0.28" textLength="40.4" lengthAdjust="spacingAndGlyphs" >227 392 000</text>
<text x="47.7" y="216.4" font-size="7.2" font-weight="700" fill="#111" stroke="#111" stroke-width="0.12" textLength="24.3" lengthAdjust="spacingAndGlyphs" >Jupiter</text>
<text x="105.6" y="216.4" font-size="7.2" font-weight="400" fill="#111" stroke="#111" stroke-width="0.28" textLength="40.4" lengthAdjust="spacingAndGlyphs" >777 920 000</text>
<text x="47.7" y="236.1" font-size="7.2" font-weight="700" fill="#111" stroke="#111" stroke-width="0.12" textLength="25.3" lengthAdjust="spacingAndGlyphs" >Uranus</text>
<text x="105.6" y="236.1" font-size="7.2" font-weight="400" fill="#111" stroke="#111" stroke-width="0.28" textLength="46.8" lengthAdjust="spacingAndGlyphs" >2 869 328 000</text>
<text x="47.7" y="255.7" font-size="7.2" font-weight="700" fill="#111" stroke="#111" stroke-width="0.12" textLength="23.4" lengthAdjust="spacingAndGlyphs" >Saturn</text>
<text x="105.6" y="255.7" font-size="7.2" font-weight="400" fill="#111" stroke="#111" stroke-width="0.28" textLength="46.8" lengthAdjust="spacingAndGlyphs" >1 427 184 000</text>
<text x="47.7" y="275.3" font-size="7.2" font-weight="700" fill="#111" stroke="#111" stroke-width="0.12" textLength="29.7" lengthAdjust="spacingAndGlyphs" >Mercury</text>
<text x="105.6" y="275.3" font-size="7.2" font-weight="400" fill="#111" stroke="#111" stroke-width="0.28" textLength="36.5" lengthAdjust="spacingAndGlyphs" >58 344 000</text>
<text x="47.7" y="294.9" font-size="7.2" font-weight="700" fill="#111" stroke="#111" stroke-width="0.12" textLength="30.0" lengthAdjust="spacingAndGlyphs" >Neptune</text>
<text x="105.6" y="294.9" font-size="7.2" font-weight="400" fill="#111" stroke="#111" stroke-width="0.28" textLength="46.8" lengthAdjust="spacingAndGlyphs" >4 488 000 000</text>
<text x="47.7" y="314.6" font-size="7.2" font-weight="700" fill="#111" stroke="#111" stroke-width="0.12" textLength="21.2" lengthAdjust="spacingAndGlyphs" >Venus</text>
<text x="105.6" y="314.6" font-size="7.2" font-weight="400" fill="#111" stroke="#111" stroke-width="0.28" textLength="40.4" lengthAdjust="spacingAndGlyphs" >107 712 000</text>
<text x="44.9" y="338.4" font-size="7.9" font-weight="700" fill="#df1f18" stroke="#df1f18" stroke-width="0.12" textLength="42.0" lengthAdjust="spacingAndGlyphs" >Question 2</text>
<text x="44.9" y="352.2" font-size="7.23" font-weight="400" fill="#111" stroke="#111" stroke-width="0.28" textLength="244.0" lengthAdjust="spacingAndGlyphs" >State the planet closest to the Sun and include its distance in kilometres.</text>
<text x="44.9" y="392.2" font-size="7.9" font-weight="700" fill="#df1f18" stroke="#df1f18" stroke-width="0.12" textLength="42.0" lengthAdjust="spacingAndGlyphs" >Question 3</text>
<text x="44.9" y="406.2" font-size="7.23" font-weight="400" fill="#111" stroke="#111" stroke-width="0.28" textLength="251.5" lengthAdjust="spacingAndGlyphs" >State the planet farthest from the Sun including the distance in kilometres.</text>
<text x="44.9" y="449.8" font-size="7.9" font-weight="700" fill="#df1f18" stroke="#df1f18" stroke-width="0.12" textLength="42.0" lengthAdjust="spacingAndGlyphs" >Question 4</text>
<text x="44.9" y="463.5" font-size="7.23" font-weight="400" fill="#111" stroke="#111" stroke-width="0.28" textLength="296.5" lengthAdjust="spacingAndGlyphs" >Determine how much farther Venus is from the Sun compared to Mercury in kilometres.</text>
<path d="M44.9 370.0H355.2 M44.9 424.4H355.2 M44.9 482.0H355.2 M44.9 499.8H355.2" stroke="#8a8a8c" stroke-width="0.9" fill="none"/>
<text x="343.6" y="515.5" font-size="6.6" font-weight="700" fill="#111" stroke="#111" stroke-width="0.12" textLength="17.5" lengthAdjust="spacingAndGlyphs" >1 of 2</text>
<rect x="366.4" y="0" width="3" height="525.0" fill="url(#hl)"/>
<rect x="0" y="0" width="369.4" height="0.9" fill="#fff" opacity=".45"/>
</g>
</g>
<rect x="1016" y="417.5" width="250" height="83" fill="#000" opacity=".45" filter="url(#blur2)"/>
<rect x="1017.2" y="418.4" width="243" height="80.1" fill="#2b2b2b"/>
<g><path d="M998 433.4 H1036.4 V444 H1040.6 V448.8 H1045 Q1050 448.8 1050 453.8 V472.8 Q1050 477.8 1045 477.8 H1036.4 V484.8 H998 V477.8 H991.4 Q986.4 477.8 986.4 472.8 V453.8 Q986.4 448.8 991.4 448.8 H993.8 V444 H998 Z" fill="#fff" stroke="#fff" stroke-width="5.2" stroke-linejoin="round"/><path d="M998 433.4 H1036.4 V444 H1040.6 V448.8 H1045 Q1050 448.8 1050 453.8 V472.8 Q1050 477.8 1045 477.8 H1036.4 V484.8 H998 V477.8 H991.4 Q986.4 477.8 986.4 472.8 V453.8 Q986.4 448.8 991.4 448.8 H993.8 V444 H998 Z" fill="#141414"/><rect x="1000.4" y="435.9" width="33.6" height="12.7" fill="#fff"/><rect x="999.8" y="457.5" width="34.9" height="2.9" fill="#fff"/><rect x="1036" y="453" width="2.6" height="2.6" fill="#fff"/><rect x="1041" y="453" width="2.6" height="2.6" fill="#fff"/><rect x="994" y="464.2" width="4" height="9.8" fill="#fff"/><rect x="1036" y="464.2" width="4" height="9.8" fill="#fff"/><rect x="1000.4" y="464.4" width="33.6" height="17.8" fill="#fff"/><path d="M1003.2 468.9H1030.9M1003.2 473.3H1030.9M1003.2 477.8H1030.9" stroke="#141414" stroke-width="1.5"/></g>
<g fill="#fff" stroke="#000" stroke-opacity=".35" stroke-width="0.6" paint-order="stroke"><text x="1066.7" y="455.2" font-size="22.6" font-weight="700" textLength="56.3" lengthAdjust="spacingAndGlyphs">B&amp;W</text><text x="1066.2" y="479.4" font-size="21" textLength="168.5" lengthAdjust="spacingAndGlyphs">Options Available</text></g>
<g transform="translate(0,0.7)"><path d="M1023.4 640 V558 A47 47 0 0 1 1070.4 511.3 H1270 V640 Z" fill="#e8241c"/><path d="M1024 640 V558 A46.5 46.5 0 0 1 1070.5 511.8 H1270 V640 Z" fill="#fff"/><path d="M1026.2 640 V559 A45 45 0 0 1 1071.2 514 H1270 V640 Z" fill="#f0625a"/></g>
<g fill="none" stroke="#111" stroke-linecap="round" stroke-linejoin="round"><path d="M1080 580.5 C1079 572 1072 566.5 1071.6 556.5 C1071.2 546.5 1078 541.6 1088 541.6 C1098 541.6 1104.4 547 1104 556.5 C1103.6 566.5 1097 572 1096 580.5" stroke-width="2.1"/><path d="M1073.2 551.5 C1075 544.5 1081 541.3 1088 541.3 C1095 541.3 1100.6 544.5 1102.6 551" stroke-width="3.6"/><path d="M1078 584.2 L1096.6 583 M1080.4 590.6 L1094.8 589.4 M1081.8 597.2 L1093 596" stroke-width="4.3" stroke-linecap="square"/><path d="M1088 582 V598" stroke-width="5"/><path d="M1084.2 598.6 H1092.2 L1087.2 605.4 Z" fill="#111" stroke-width="0.8"/></g>
<g font-weight="700" stroke-linejoin="round"><text x="1110.6" y="559.2" font-size="36.5" fill="#fff" stroke="#fff" stroke-width="0.9" filter="url(#ol)" textLength="102" lengthAdjust="spacingAndGlyphs">national</text><rect x="1108.6" y="560.4" width="106" height="22.6" fill="#fff"/><text x="1109.6" y="581.9" font-size="28.6" fill="#111" stroke="#111" stroke-width="1.5" textLength="103.8" lengthAdjust="spacingAndGlyphs">SCIENCE</text><text x="1110.6" y="605.3" font-size="31" fill="#fff" stroke="#fff" stroke-width="0.9" filter="url(#ol)" textLength="69.3" lengthAdjust="spacingAndGlyphs">WEEK</text><text x="1184.2" y="598.8" font-size="19" fill="#fff" stroke="#fff" stroke-width="0.5" filter="url(#ol2)" textLength="29" lengthAdjust="spacingAndGlyphs">2025</text></g>
</svg>
</body></html>
